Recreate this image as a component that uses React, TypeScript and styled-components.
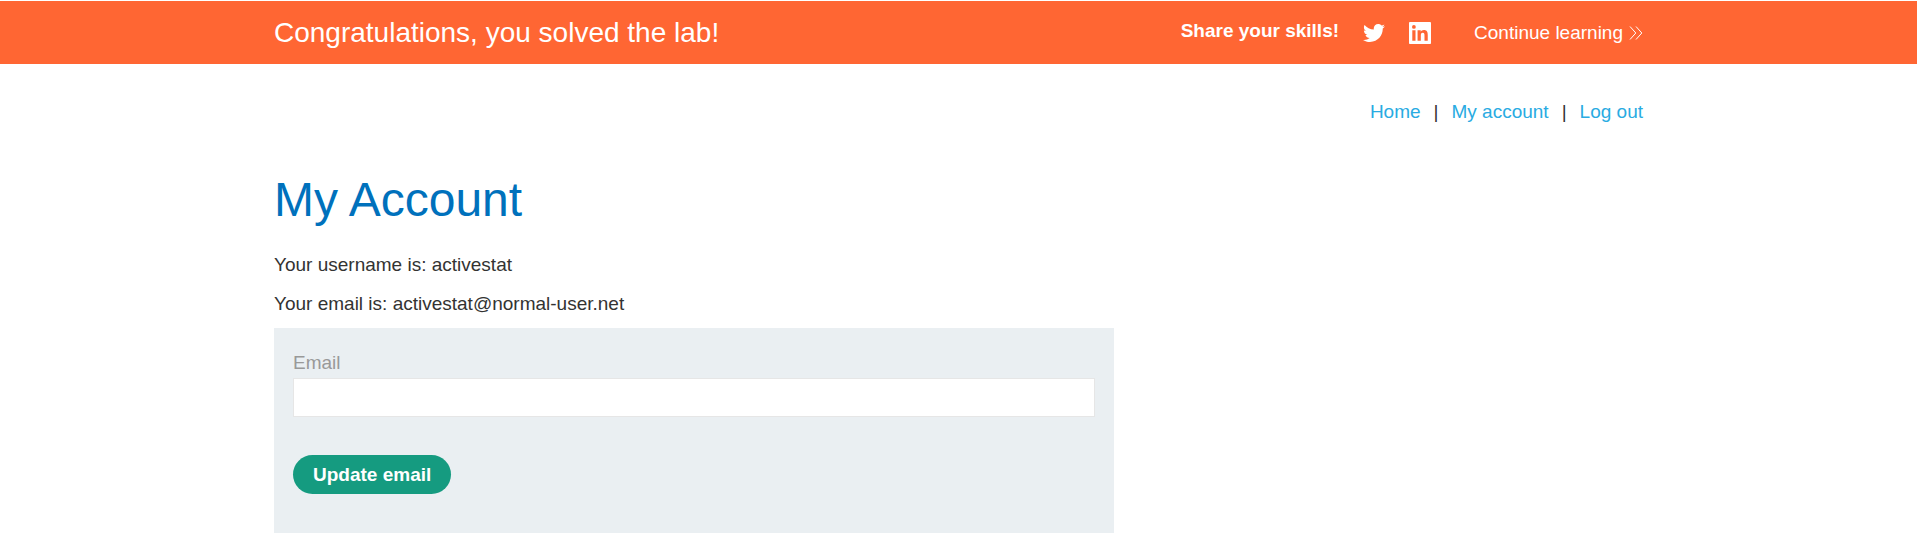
import React from "react";
import styled, { createGlobalStyle } from "styled-components";
import { FaTwitter } from "react-icons/fa";

const GlobalStyle = createGlobalStyle`
  *, *::before, *::after { box-sizing: border-box; }
  body {
    margin: 0;
    background: #fff;
    color: #333332;
    font-family: "Liberation Sans", Arial, Helvetica, sans-serif;
    font-size: 19px;
    line-height: 24px;
  }
`;

const Container = styled.div`
  width: 100%;
  max-width: 1369px;
  margin: 0 auto;
`;

const Banner = styled.header`
  margin-top: 1px;
  background: #ff6633;
  color: #fff;
`;

const BannerRow = styled(Container)`
  display: flex;
  align-items: center;
  justify-content: space-between;
  min-height: 63px;
`;

const BannerTitle = styled.h2`
  margin: 0;
  font-size: 28px;
  line-height: 32px;
  font-weight: 400;
`;

const BannerActions = styled.div`
  display: flex;
  align-items: center;
`;

const ShareLabel = styled.span`
  padding-bottom: 4px;
  margin-right: 24px;
  font-weight: 700;
`;

const ShareLinks = styled.div`
  display: flex;
  align-items: center;
  gap: 24px;
  margin-right: 43px;
`;

const ShareLink = styled.a`
  display: flex;
  color: #fff;
`;

const ContinueLink = styled.a`
  display: flex;
  align-items: center;
  gap: 6px;
  color: #fff;
  text-decoration: none;
`;

const Nav = styled.nav`
  display: flex;
  justify-content: flex-end;
  gap: 13px;
  padding: 36px 0 44px;
`;

const NavLink = styled.a`
  color: #29abe2;
  text-decoration: none;
`;

const Separator = styled.span`
  color: #333332;
`;

const PageTitle = styled.h1`
  margin: 0;
  color: #0071bc;
  font-size: 48px;
  line-height: 64px;
  font-weight: 400;
`;

const Details = styled.div`
  display: flex;
  flex-direction: column;
  gap: 15px;
  padding: 21px 0 12px;
`;

const Detail = styled.p`
  margin: 0;
`;

const EmailForm = styled.form`
  display: flex;
  flex-direction: column;
  align-items: flex-start;
  max-width: 840px;
  padding: 23px 19px 39px;
  background: #eaeff2;
`;

const Label = styled.label`
  margin-bottom: 3px;
  color: #999;
`;

const EmailInput = styled.input`
  width: 100%;
  height: 39px;
  margin-bottom: 38px;
  padding: 0 10px;
  border: 1px solid #e6e6e6;
  border-radius: 0;
  background: #fff;
  font: inherit;
`;

const SubmitButton = styled.button`
  height: 39px;
  padding: 0 20px;
  border: 0;
  border-radius: 20px;
  background: #159b80;
  color: #fff;
  font: inherit;
  font-weight: 700;
`;

const LinkedInIcon = () => (
  <svg width="22" height="22" viewBox="0 0 24 24" fill="currentColor" aria-hidden="true">
    <path
      fillRule="evenodd"
      d="M1.2 0h21.6C23.5 0 24 .5 24 1.2v21.6c0 .7-.5 1.2-1.2 1.2H1.2C.5 24 0 23.500 0 22.800V1.200C0 .5.5 0 1.200 0zM3.600 9v11.400h3.500V9zM5.350 3.300a2.050 2.050 0 1 0 0 4.100 2.050 2.050 0 0 0 0-4.100zM9.350 9v11.400h3.550v-5.600c0-1.500.3-2.950 2.150-2.950s1.850 1.700 1.850 3.050v5.500h3.550v-6.250c0-3.070-.66-5.430-4.250-5.430-1.720 0-2.880.94-3.350 1.840h-.05V9z"
    />
  </svg>
);

const links = ["Home", "My account", "Log out"];

export default function App() {
  return (
    <>
      <GlobalStyle />
      <Banner>
        <BannerRow>
          <BannerTitle>Congratulations, you solved the lab!</BannerTitle>
          <BannerActions>
            <ShareLabel>Share your skills!</ShareLabel>
            <ShareLinks>
              <ShareLink href="#twitter" aria-label="Share on Twitter">
                <FaTwitter size={22} />
              </ShareLink>
              <ShareLink href="#linkedin" aria-label="Share on LinkedIn">
                <LinkedInIcon />
              </ShareLink>
            </ShareLinks>
            <ContinueLink href="#learn">
              Continue learning
              <svg width="14" height="14" viewBox="0 0 14 14" fill="none" stroke="#fff" aria-hidden="true">
                <path d="M1 .5 6.800 7 1 13.500M7 .5 12.800 7 7 13.500" />
              </svg>
            </ContinueLink>
          </BannerActions>
        </BannerRow>
      </Banner>
      <Container as="main">
        <Nav>
          {links.map((name, i) => (
            <React.Fragment key={name}>
              {i > 0 && <Separator>|</Separator>}
              <NavLink href="#">{name}</NavLink>
            </React.Fragment>
          ))}
        </Nav>
        <PageTitle>My Account</PageTitle>
        <Details>
          <Detail>Your username is: activestat</Detail>
          <Detail>Your email is: activestat@normal-user.net</Detail>
        </Details>
        <EmailForm onSubmit={(e) => e.preventDefault()}>
          <Label htmlFor="email">Email</Label>
          <EmailInput id="email" type="email" name="email" />
          <SubmitButton type="submit">Update email</SubmitButton>
        </EmailForm>
      </Container>
    </>
  );
}
